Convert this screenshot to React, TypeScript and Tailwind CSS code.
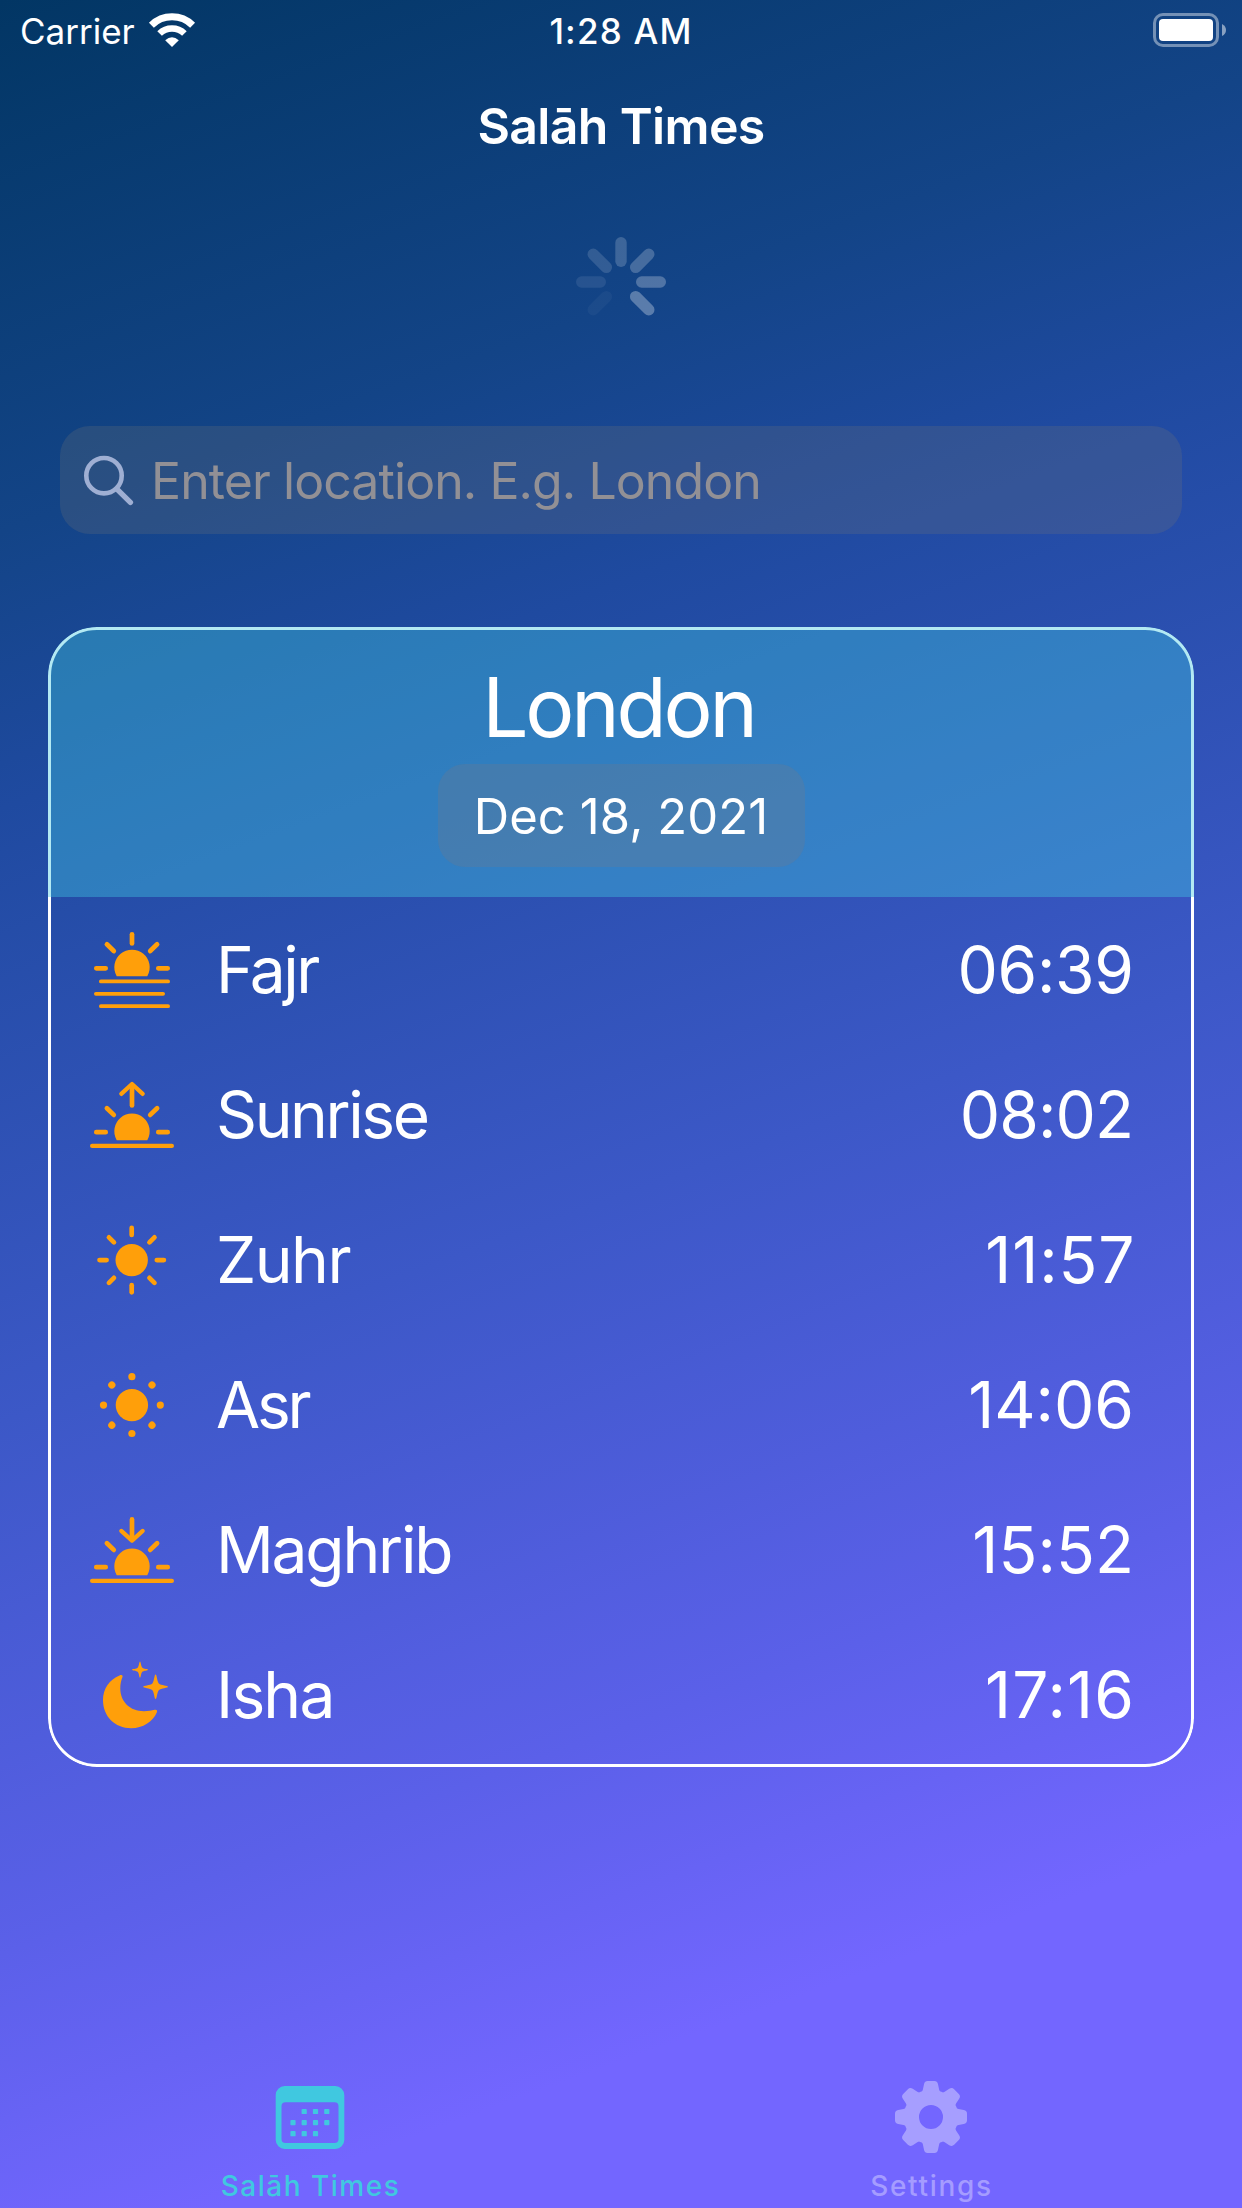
import type { ReactNode } from "react";

const ORANGE = "#ff9f0a";

function RowIcon({ children }: { children: ReactNode }) {
  return (
    <svg
      viewBox="0 0 96 145"
      className="h-[145px] w-24 shrink-0"
      fill="none"
      stroke={ORANGE}
      strokeWidth={4.7}
      strokeLinecap="round"
      strokeLinejoin="round"
      aria-hidden="true"
    >
      {children}
    </svg>
  );
}

/** Sun sitting on the horizon; `y` is the height of its side rays. */
function HalfSun({ y }: { y: number }) {
  return (
    <>
      <path
        d={`M32.7 ${y + 8} A17.7 17.7 0 1 1 63.3 ${y + 8} Z`}
        fill={ORANGE}
        stroke="none"
      />
      <path
        d={`M12.3 ${y}H21.7M74.3 ${y}H83.7M22.9 ${y - 24}L29.8 ${y - 17.3}M73.1 ${y - 24}L66.2 ${y - 17.3}`}
      />
    </>
  );
}

function FajrIcon() {
  return (
    <RowIcon>
      <HalfSun y={71.3} />
      <path d="M48 37.3V46.4" />
      <path d="M16.9 84.4H84.1M11.9 96.8H79.1M16.9 109.2H84.1" strokeWidth={3.8} />
    </RowIcon>
  );
}

function SunriseIcon() {
  return (
    <RowIcon>
      <HalfSun y={90.2} />
      <path d="M48 43V63.4" />
      <path d="M37.3 51.9L48 42L58.7 51.9M8.1 103.9H87.9" strokeWidth={4.2} />
    </RowIcon>
  );
}

function MaghribIcon() {
  return (
    <RowIcon>
      <HalfSun y={90.2} />
      <path d="M48 42.4V62" />
      <path d="M37.3 53.9L48 63.6L58.7 53.9M8.1 103.9H87.9" strokeWidth={4.2} />
    </RowIcon>
  );
}

const ANGLES = [0, 45, 90, 135, 180, 225, 270, 315];

function ZuhrIcon() {
  return (
    <RowIcon>
      <circle cx={47.7} cy={73.1} r={16.2} fill={ORANGE} stroke="none" />
      {ANGLES.map((a) => (
        <path key={a} d="M47.7 40.9V48" transform={`rotate(${a} 47.7 73.1)`} />
      ))}
    </RowIcon>
  );
}

function AsrIcon() {
  return (
    <RowIcon>
      <g fill={ORANGE} stroke="none">
        <circle cx={47.9} cy={73.1} r={16.2} />
        {ANGLES.map((a) => (
          <circle key={a} cx={47.9} cy={44.7} r={3.6} transform={`rotate(${a} 47.9 73.1)`} />
        ))}
      </g>
    </RowIcon>
  );
}

function IshaIcon() {
  return (
    <RowIcon>
      <g fill={ORANGE} stroke="none">
        <path d="M35.5 53.4C37.6 52.5 39.2 53.2 38.4 55.3C37.1 58.6 36.3 62.2 36.3 66.5C36.3 80 46.2 89.2 60 89.2C64.2 89.2 67.7 88.7 70.6 87.8C72.7 87.2 73.6 88.4 72.9 90.2C68.8 99.8 58.8 106.2 47.2 106.2C30.8 106.2 19 94.4 19 78C19 66.6 25.6 57.3 35.5 53.4Z" />
        <path d="M56 39.6C56.8 39.6 56.9 43.8 58.1 45.4C59.6 46.9 64.1 46.9 64.1 47.7C64.1 48.5 59.6 48.5 58.1 50C56.9 51.6 56.8 55.8 56 55.8C55.2 55.8 55.1 51.6 53.9 50C52.4 48.5 47.9 48.5 47.9 47.7C47.9 46.9 52.4 46.9 53.9 45.4C55.1 43.8 55.2 39.6 56 39.6Z" />
        <path d="M71.6 52.6C72.9 52.6 72.9 59 74.8 61.4C77.1 63.4 84.1 63.5 84.1 64.8C84.1 66.1 77.1 66.2 74.8 68.2C72.9 70.6 72.9 77 71.6 77C70.3 77 70.3 70.6 68.4 68.2C66.1 66.2 59.1 66.1 59.1 64.8C59.1 63.5 66.1 63.4 68.4 61.4C70.3 59 70.3 52.6 71.6 52.6Z" />
      </g>
    </RowIcon>
  );
}

const TIMES = [
  { name: "Fajr", time: "06:39", Icon: FajrIcon, nameCls: "tracking-[-2.5px]", timeCls: "tracking-[-0.3px] mr-[0.3px]" },
  { name: "Sunrise", time: "08:02", Icon: SunriseIcon, nameCls: "tracking-[-2.4px]", timeCls: "tracking-[-0.9px] mr-[0.9px]" },
  { name: "Zuhr", time: "11:57", Icon: ZuhrIcon, nameCls: "tracking-[-1.5px]", timeCls: "tracking-[0.9px] -mr-[1.4px]" },
  { name: "Asr", time: "14:06", Icon: AsrIcon, nameCls: "tracking-[-3.2px]", timeCls: "tracking-[0px] mr-0" },
  { name: "Maghrib", time: "15:52", Icon: MaghribIcon, nameCls: "tracking-[-2.2px]", timeCls: "tracking-[0.1px] -mr-[0.1px]" },
  { name: "Isha", time: "17:16", Icon: IshaIcon, nameCls: "tracking-[-1.8px]", timeCls: "tracking-[1.2px] -mr-[1.2px]" },
];

function StatusBar() {
  return (
    <div className="grid h-[62px] grid-cols-3 items-center pl-[15px] pr-[15px] text-[35px]">
      <div className="flex items-center pl-[5px]">
        <span>Carrier</span>
        <svg viewBox="0 0 48 36" className="ml-[13px] -mt-0.5 h-9 w-12" fill="none" stroke="#fff" aria-hidden="true">
          <path d="M3.4 13.2A29.5 29.5 0 0 1 44.6 13.2" strokeWidth={7} />
          <path d="M11.6 21.5A17.8 17.8 0 0 1 36.4 21.5" strokeWidth={6.6} />
          <path d="M24 35L17.2 28.2Q24 22.2 30.8 28.2Z" fill="#fff" stroke="none" />
        </svg>
      </div>
      <div className="text-center font-medium tracking-[1.2px]">1:28 AM</div>
      <div className="flex justify-end">
        <svg viewBox="0 0 74 34" className="-mt-0.5 h-[34px] w-[74px]" fill="none" aria-hidden="true">
          <rect x={1.5} y={1.5} width={63} height={31} rx={8.5} stroke="#fff" strokeOpacity={0.42} strokeWidth={3} />
          <rect x={6} y={6} width={54} height={22} rx={4} fill="#fff" />
          <path d="M69 11Q73 13 73 17T69 23Z" fill="#fff" fillOpacity={0.5} />
        </svg>
      </div>
    </div>
  );
}

const SPOKES = [
  { angle: 0, opacity: 0.19 },
  { angle: 45, opacity: 0.22 },
  { angle: 90, opacity: 0.26 },
  { angle: 135, opacity: 0.3 },
  { angle: 225, opacity: 0.04 },
  { angle: 270, opacity: 0.09 },
  { angle: 315, opacity: 0.14 },
];

function Spinner() {
  return (
    <div className="flex h-[184px] items-center justify-center">
      <svg viewBox="0 0 92 92" className="h-[92px] w-[92px]" aria-hidden="true">
        {SPOKES.map(({ angle, opacity }) => (
          <rect
            key={angle}
            x={40.3}
            y={1}
            width={11.4}
            height={30}
            rx={5.7}
            fill="#fff"
            fillOpacity={opacity}
            transform={`rotate(${angle} 46 46)`}
          />
        ))}
      </svg>
    </div>
  );
}

function SearchField() {
  return (
    <div className="mx-[60px] mt-[52px] flex h-[108px] items-center rounded-[30px] bg-[rgba(118,118,118,0.24)] pl-[22px]">
      <svg viewBox="0 0 56 56" className="h-14 w-14 shrink-0" fill="none" stroke="#9fafd3" strokeLinecap="round" aria-hidden="true">
        <circle cx={22} cy={23.7} r={17.7} strokeWidth={4.6} />
        <path d="M35.2 37.3L48.4 50.4" strokeWidth={5.4} />
      </svg>
      <span className="ml-[13px] mt-px whitespace-nowrap text-[50px] leading-none tracking-[-0.92px] text-[#929095]">
        Enter location. E.g. London
      </span>
    </div>
  );
}

function TimesCard() {
  return (
    <section className="relative mx-12 mt-[93px] overflow-hidden rounded-[49px]">
      <div className="pointer-events-none absolute inset-0 rounded-[49px] border-3 border-white" />
      <header className="relative flex h-[270px] flex-col items-center bg-[rgba(64,200,224,0.4)] pt-[31px]">
        <h2 className="pr-[5px] text-[82px] leading-[100px] tracking-[-3.2px]">London</h2>
        <div className="mt-1.5 flex h-[103px] w-[367px] items-center justify-center rounded-[27px] bg-[rgba(124,118,128,0.25)] pt-0.5 text-[49px] tracking-[0.1px]">
          Dec 18, 2021
        </div>
      </header>
      <ul>
        {TIMES.map(({ name, time, Icon, nameCls, timeCls }) => (
          <li key={name} className="flex h-[145px] items-center pl-9 pr-[60px] text-[64px] leading-none">
            <Icon />
            <span className={`ml-9 ${nameCls}`}>{name}</span>
            <span className={`ml-auto ${timeCls}`}>{time}</span>
          </li>
        ))}
      </ul>
    </section>
  );
}

function CalendarIcon() {
  const dots = [
    [30.2, 30.5], [41.5, 30.5], [52.8, 30.5],
    [19, 41.6], [30.2, 41.6], [41.5, 41.6], [52.8, 41.6],
    [19, 52.7], [30.2, 52.7], [41.5, 52.7],
  ];
  return (
    <svg viewBox="0 0 72 72" className="-ml-px h-[72px] w-[72px]" fill="#40c8e0" aria-hidden="true">
      <path
        fillRule="evenodd"
        d="M10.7 5H61.3A9 9 0 0 1 70.3 14V59A9 9 0 0 1 61.3 68H10.7A9 9 0 0 1 1.7 59V14A9 9 0 0 1 10.7 5ZM11.5 21.3A4 4 0 0 0 7.5 25.3V58A4 4 0 0 0 11.5 62H60.5A4 4 0 0 0 64.5 58V25.3A4 4 0 0 0 60.5 21.3Z"
      />
      {dots.map(([x, y]) => (
        <rect key={`${x}-${y}`} x={x - 2.6} y={y - 2.6} width={5.2} height={5.2} rx={0.9} />
      ))}
    </svg>
  );
}

function GearIcon() {
  return (
    <svg viewBox="0 0 72 72" className="-ml-px h-[72px] w-[72px]" aria-hidden="true">
      <g opacity={0.37} fill="#fff">
        <circle cx={36} cy={36} r={19.6} fill="none" stroke="#fff" strokeWidth={15.2} />
        {ANGLES.map((a) => (
          <path
            key={a}
            d="M25.2 13.5Q27.2 11.3 27.9 8.5L29 3.2Q29.7 0 32.7 0H39.3Q42.3 0 43 3.2L44.1 8.5Q44.8 11.3 46.8 13.5L42 18H30Z"
            transform={`rotate(${a} 36 36)`}
          />
        ))}
      </g>
    </svg>
  );
}

function TabBar() {
  return (
    <nav className="mt-auto flex pb-1 text-[28px] font-medium leading-9">
      <div className="flex flex-1 flex-col items-center gap-[15px] text-[#40c8e0]">
        <CalendarIcon />
        <span className="tracking-[1.5px]">Salāh Times</span>
      </div>
      <div className="flex flex-1 flex-col items-center gap-[15px] text-[#a59cff]">
        <GearIcon />
        <span className="tracking-[1.7px]">Settings</span>
      </div>
    </nav>
  );
}

export default function App() {
  return (
    <main className="flex h-[2208px] w-[1242px] flex-col overflow-hidden bg-[linear-gradient(160deg,#023664_0%,#134487_20%,#1f4aa0_30.4%,#3c58c7_53.5%,#5b60e9_73.5%,#7366ff_86%)] font-[Inter,sans-serif] text-white">
      <StatusBar />
      <h1 className="flex h-32 items-center justify-center text-[50px] font-semibold tracking-[-0.65px]">
        Salāh Times
      </h1>
      <Spinner />
      <SearchField />
      <TimesCard />
      <TabBar />
    </main>
  );
}
